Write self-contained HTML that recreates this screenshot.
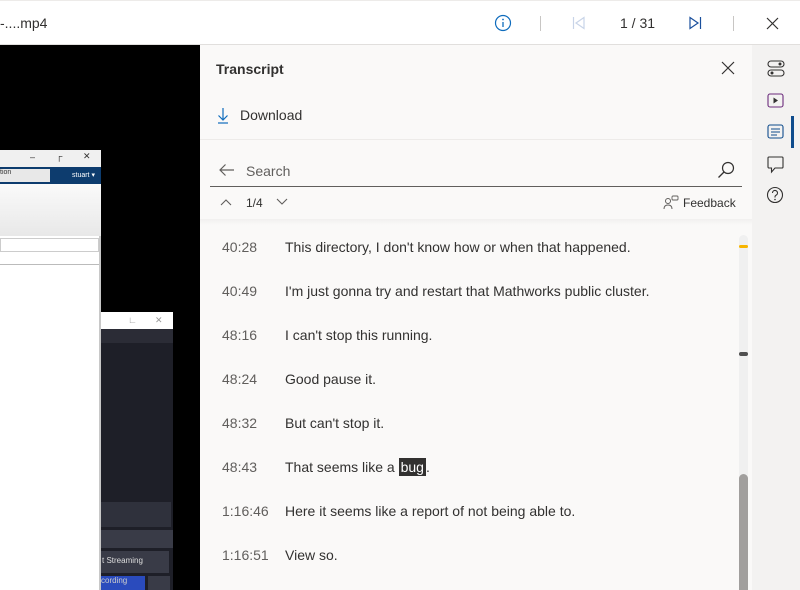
<!DOCTYPE html>
<html><head><style>
*{margin:0;padding:0;box-sizing:border-box}
body{width:800px;height:590px;overflow:hidden;position:relative;font-family:"Liberation Sans",sans-serif;background:#000;color:#323130}
.abs{position:absolute}
.top{left:0;top:0;width:800px;height:45px;background:#fff;border-bottom:1px solid #e1dfdd;border-top:1px solid #edebe9}
.panel{left:200px;top:45px;width:552px;height:545px;background:#faf9f8}
.rail{left:752px;top:45px;width:48px;height:545px;background:#f3f2f1}
.row{position:absolute;left:222px;font-size:14px;color:#323130}
.row .t{position:absolute;left:0;color:#605e5c}
.row .x{position:absolute;left:63px;white-space:nowrap}
</style></head><body>
<div class="abs top">
 <div class="abs" style="left:0;top:14px;font-size:14px;color:#323130">-....mp4</div>
 <svg class="abs" style="left:494px;top:13px" width="18" height="18"><circle cx="9" cy="9" r="7.5" fill="none" stroke="#0f6cbd" stroke-width="1.2"/><line x1="9" y1="8" x2="9" y2="13" stroke="#0f6cbd" stroke-width="1.3"/><circle cx="9" cy="5.5" r=".9" fill="#0f6cbd"/></svg>
 <div class="abs" style="left:540px;top:15px;width:1px;height:15px;background:#c8c6c4"></div>
 <svg class="abs" style="left:572px;top:15px" width="14" height="14"><line x1="1.5" y1="1" x2="1.5" y2="13" stroke="#c8d4e8" stroke-width="1.2"/><path d="M12 1.5 L4 7 L12 12.5Z" fill="none" stroke="#c8d4e8" stroke-width="1.2"/></svg>
 <div class="abs" style="left:620px;top:14px;font-size:14px;color:#323130">1 / 31</div>
 <svg class="abs" style="left:688px;top:15px" width="14" height="14"><line x1="12.5" y1="1" x2="12.5" y2="13" stroke="#1a4f9c" stroke-width="1.2"/><path d="M2 1.5 L10 7 L2 12.5Z" fill="none" stroke="#1a4f9c" stroke-width="1.2"/></svg>
 <div class="abs" style="left:733px;top:15px;width:1px;height:15px;background:#c8c6c4"></div>
 <svg class="abs" style="left:766px;top:16px" width="13" height="13"><path d="M1 1L12 12M12 1L1 12" stroke="#323130" stroke-width="1.2"/></svg>
</div>
<!-- video content -->
<div class="abs" style="left:0;top:150px;width:101px;height:440px;background:#fff;border-right:2px solid #c8c8c8"></div>
<div class="abs" style="left:0;top:150px;width:101px;height:17px;background:#f0f0f0;font-size:9px"><span class="abs" style="left:30px;top:2px">–</span><span class="abs" style="left:56px;top:1px">┌</span><span class="abs" style="left:83px;top:1px">✕</span></div>
<div class="abs" style="left:0;top:167px;width:101px;height:17px;background:#0d3c6e"><div class="abs" style="left:0;top:2px;width:50px;height:13px;background:#e8e8e8;font-size:7px;color:#333">tion</div><span class="abs" style="left:72px;top:4px;font-size:7px;color:#fff">stuart ▾</span></div>
<div class="abs" style="left:0;top:184px;width:101px;height:52px;background:linear-gradient(#fafafa,#e8e8e8)"></div>
<div class="abs" style="left:0;top:238px;width:99px;height:14px;background:#fff;border:1px solid #ccc"></div>
<div class="abs" style="left:0;top:264px;width:99px;height:1px;background:#bbb"></div>
<div class="abs" style="left:101px;top:312px;width:72px;height:278px;background:#1e1f28"></div>
<div class="abs" style="left:101px;top:312px;width:72px;height:17px;background:#fff;font-size:9px;color:#999"><span class="abs" style="left:27px;top:3px">∟</span><span class="abs" style="left:54px;top:3px">✕</span></div>
<div class="abs" style="left:101px;top:329px;width:72px;height:14px;background:#2b2c36"></div>
<div class="abs" style="left:101px;top:502px;width:70px;height:25px;background:#2f313c"></div>
<div class="abs" style="left:101px;top:530px;width:72px;height:18px;background:#393b47"></div>
<div class="abs" style="left:101px;top:551px;width:68px;height:22px;background:#393b47;color:#ddd;font-size:8px;padding:5px 0 0 1px">t Streaming</div>
<div class="abs" style="left:101px;top:576px;width:44px;height:14px;background:#2a4bbd;color:#ccc;font-size:8px">cording</div>
<div class="abs" style="left:148px;top:576px;width:22px;height:14px;background:#393b47"></div>

<div class="abs panel">
 <div class="abs" style="left:16px;top:16px;font-size:14px;font-weight:bold;color:#323130">Transcript</div>
 <svg class="abs" style="left:521px;top:16px" width="14" height="14"><path d="M1 1L13 13M13 1L1 13" stroke="#323130" stroke-width="1.2"/></svg>
 <svg class="abs" style="left:17px;top:62px" width="12" height="17"><path d="M6 1V13M1.5 8.5L6 13L10.5 8.5" fill="none" stroke="#0f6cbd" stroke-width="1.2"/><line x1="1" y1="16" x2="11" y2="16" stroke="#0f6cbd" stroke-width="1.2"/></svg>
 <div class="abs" style="left:40px;top:62px;font-size:14px">Download</div>
 <div class="abs" style="left:0;top:94px;width:552px;height:1px;background:#edebe9"></div>
 <svg class="abs" style="left:18px;top:118px" width="17" height="14"><path d="M16 7H2M7.5 1.5L2 7L7.5 12.5" fill="none" stroke="#605e5c" stroke-width="1.2"/></svg>
 <div class="abs" style="left:46px;top:118px;font-size:14px;color:#605e5c">Search</div>
 <svg class="abs" style="left:517px;top:116px" width="18" height="18"><circle cx="11" cy="7" r="5.5" fill="none" stroke="#323130" stroke-width="1.2"/><line x1="7" y1="11" x2="1.5" y2="16.5" stroke="#323130" stroke-width="1.3"/></svg>
 <div class="abs" style="left:10px;top:141px;width:532px;height:1px;background:#605e5c"></div>
 <svg class="abs" style="left:20px;top:153px" width="12" height="8"><path d="M1 7L6 2L11 7" fill="none" stroke="#605e5c" stroke-width="1.1"/></svg>
 <div class="abs" style="left:46px;top:151px;font-size:12px;color:#323130">1/4</div>
 <svg class="abs" style="left:76px;top:153px" width="12" height="8"><path d="M1 1L6 6L11 1" fill="none" stroke="#605e5c" stroke-width="1.1"/></svg>
 <svg class="abs" style="left:463px;top:150px" width="16" height="15"><circle cx="5" cy="6" r="2.5" fill="none" stroke="#605e5c"/><path d="M1 14c0-3 2-4 4-4s4 1 4 4" fill="none" stroke="#605e5c"/><rect x="9" y="1" width="6" height="4" rx="1" fill="none" stroke="#605e5c" stroke-width=".9"/></svg>
 <div class="abs" style="left:483px;top:151px;font-size:12px;color:#323130">Feedback</div>
 <div class="abs" style="left:0;top:174px;width:552px;height:6px;background:linear-gradient(#f1f0ef,#faf9f8)"></div>
 <div class="abs" style="left:539px;top:190px;width:9px;height:355px;background:#f0f0f0;border-radius:5px"></div>
 <div class="abs" style="left:539px;top:200px;width:9px;height:3px;background:#f7b500;border-radius:2px"></div>
 <div class="abs" style="left:539px;top:307px;width:9px;height:4px;background:#505050;border-radius:2px"></div>
 <div class="abs" style="left:539px;top:429px;width:9px;height:116px;background:#a19f9d;border-radius:5px 5px 0 0"></div>
</div>
<div class="row" style="top:239px"><span class="t">40:28</span><span class="x">This directory, I don't know how or when that happened.</span></div>
<div class="row" style="top:283px"><span class="t">40:49</span><span class="x">I'm just gonna try and restart that Mathworks public cluster.</span></div>
<div class="row" style="top:327px"><span class="t">48:16</span><span class="x">I can't stop this running.</span></div>
<div class="row" style="top:371px"><span class="t">48:24</span><span class="x">Good pause it.</span></div>
<div class="row" style="top:415px"><span class="t">48:32</span><span class="x">But can't stop it.</span></div>
<div class="row" style="top:459px"><span class="t">48:43</span><span class="x">That seems like a <span style="background:#323130;color:#fff;padding:1px 2px">bug</span>.</span></div>
<div class="row" style="top:503px"><span class="t">1:16:46</span><span class="x">Here it seems like a report of not being able to.</span></div>
<div class="row" style="top:547px"><span class="t">1:16:51</span><span class="x">View so.</span></div>

<div class="abs rail">
 <svg class="abs" style="left:15px;top:15px" width="18" height="17"><rect x="1" y="1" width="16" height="6" rx="3" fill="none" stroke="#323130" stroke-width="1.1"/><rect x="1" y="10" width="16" height="6" rx="3" fill="none" stroke="#323130" stroke-width="1.1"/><circle cx="13" cy="4" r="1.5" fill="#323130"/><circle cx="5" cy="13" r="1.5" fill="#323130"/></svg>
 <svg class="abs" style="left:15px;top:48px" width="17" height="15"><rect x="1" y="1" width="15" height="13" rx="2" fill="none" stroke="#6b2a7c" stroke-width="1.1"/><path d="M6.5 4.5L11 7.5L6.5 10.5Z" fill="#323130"/></svg>
 <svg class="abs" style="left:15px;top:79px" width="17" height="15"><rect x="1" y="1" width="15" height="13" rx="2" fill="none" stroke="#0f4c8c" stroke-width="1.1"/><path d="M4 5H13M4 8H13M4 11H10" stroke="#0f4c8c" stroke-width="1"/></svg>
 <div class="abs" style="left:60px;top:0"></div>
 <div class="abs" style="left:39px;top:71px;width:3px;height:32px;background:#0f4c8c"></div>
 <svg class="abs" style="left:15px;top:111px" width="17" height="18"><path d="M2 1H15a1 1 0 0 1 1 1V11a1 1 0 0 1-1 1H8L4.5 16V12H2a1 1 0 0 1-1-1V2a1 1 0 0 1 1-1Z" fill="none" stroke="#323130" stroke-width="1.1"/></svg>
 <svg class="abs" style="left:14px;top:141px" width="18" height="18"><circle cx="9" cy="9" r="7.5" fill="none" stroke="#323130" stroke-width="1.1"/><path d="M6.5 7a2.5 2.5 0 1 1 3.5 2.2c-.8.4-1 .9-1 1.6v.7" fill="none" stroke="#323130" stroke-width="1.1"/><circle cx="9" cy="13.5" r=".8" fill="#323130"/></svg>
</div>
</body></html>
